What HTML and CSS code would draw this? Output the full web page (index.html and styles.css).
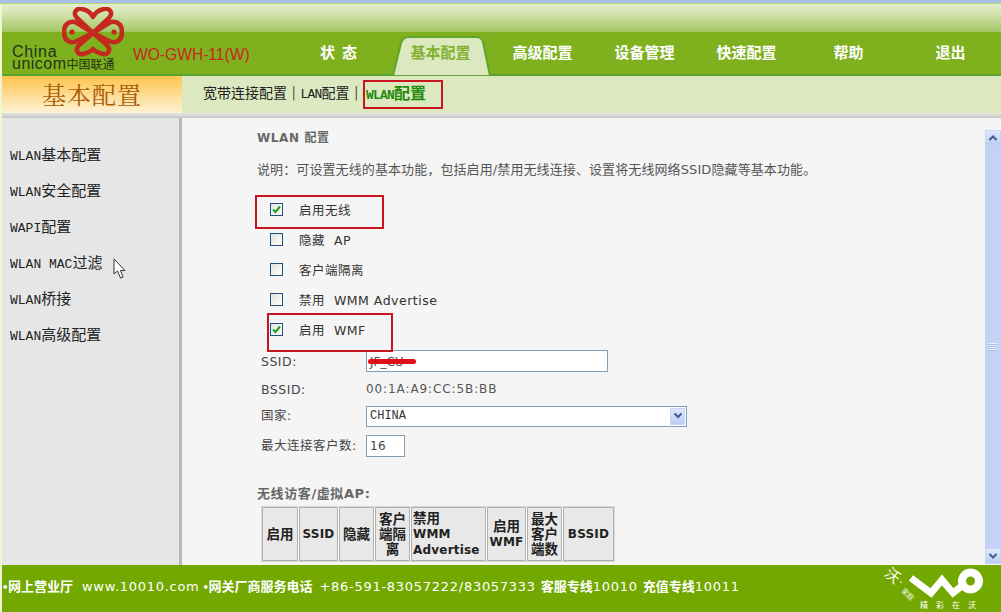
FILE: index.html
```html
<!DOCTYPE html>
<html lang="zh-CN">
<head>
<meta charset="utf-8">
<title>基本配置</title>
<link rel="stylesheet" href="styles.css">
</head>
<body>
<div class="page">
  <div class="blue-strip"></div>
  <header class="header">
    <div class="gloss"></div>
    <div class="nav-band">
      <div class="brand">
        <svg class="knot" viewBox="0 0 62 52" width="62" height="52" aria-hidden="true">
          <g fill="none" stroke="#c5281f" stroke-width="4.6" stroke-linejoin="round" stroke-linecap="round">
            <path d="M31 26 L15 11 C10 5 15 1 20 2 C25 3 29 6 31 10 C33 6 37 3 42 2 C47 1 52 5 47 11 Z"/>
            <path d="M31 26 L17 38 C12 44 17 48 21 47 C25 46 29 45 31 42 C33 45 37 46 41 47 C45 48 50 44 45 38 Z"/>
            <path d="M31 26 L15 16 C9 13 2 16 2 25 C2 34 9 37 15 34 Z"/>
            <path d="M31 26 L47 16 C53 13 60 16 60 25 C60 34 53 37 47 34 Z"/>
            <path d="M23 33 L39 19" stroke-width="3"/>
          </g>
          <circle cx="10" cy="25" r="2.6" fill="#c5281f"/>
          <circle cx="52" cy="25" r="2.6" fill="#c5281f"/>
        </svg>
        <div class="logo-text">
          <div class="logo-china">China</div>
          <div class="logo-unicom">unicom<span class="logo-cn">中国联通</span></div>
        </div>
        <div class="model">WO-GWH-11(W)</div>
      </div>
      <nav class="nav">
        <a class="nav-item">状&nbsp;&nbsp;态</a>
        <a class="nav-item nav-active">
          <svg class="tab-shape" viewBox="0 0 100 40" width="100" height="40" aria-hidden="true" preserveAspectRatio="none">
            <path d="M1 40 L9 7 Q11 1 17 1 L84 1 Q90 1 91 6 L98 40 Z" fill="#dce8c0" stroke="#5ea62c" stroke-width="2"/>
          </svg>
          <span class="tab-label">基本配置</span>
        </a>
        <a class="nav-item">高级配置</a>
        <a class="nav-item">设备管理</a>
        <a class="nav-item">快速配置</a>
        <a class="nav-item">帮助</a>
        <a class="nav-item">退出</a>
      </nav>
    </div>
    <div class="sub-band">
      <div class="section-title">基本配置</div>
      <div class="sub-links">
        <a class="sub-link"><span>宽带连接配置</span></a>
        <span class="sep">|</span>
        <a class="sub-link"><span class="lat-small">LAN</span>配置</a>
        <span class="sep">|</span>
        <a class="sub-link sub-current"><span class="lat-small">WLAN</span>配置</a>
      </div>
    </div>
  </header>
  <div class="grey-band"></div>
  <main class="main">
    <aside class="sidebar">
      <a class="side-item"><span class="lat">WLAN</span>基本配置</a>
      <a class="side-item"><span class="lat">WLAN</span>安全配置</a>
      <a class="side-item"><span class="lat">WAPI</span>配置</a>
      <a class="side-item"><span class="lat">WLAN MAC</span>过滤</a>
      <a class="side-item"><span class="lat">WLAN</span>桥接</a>
      <a class="side-item"><span class="lat">WLAN</span>高级配置</a>
    </aside>
    <section class="content">
      <h1 class="content-title">WLAN 配置</h1>
      <p class="desc">说明：可设置无线的基本功能，包括启用/禁用无线连接、设置将无线网络SSID隐藏等基本功能。</p>
      <div class="checks">
        <label class="check-row"><span class="box box-on"><svg viewBox="0 0 11 11" width="11" height="11"><path d="M2 5.5 L4.5 8 L9 2.5" fill="none" stroke="#21a121" stroke-width="2"/></svg></span>启用无线</label>
        <label class="check-row"><span class="box"></span>隐藏&nbsp; AP</label>
        <label class="check-row"><span class="box"></span>客户端隔离</label>
        <label class="check-row"><span class="box"></span>禁用&nbsp; WMM Advertise</label>
        <label class="check-row"><span class="box box-on"><svg viewBox="0 0 11 11" width="11" height="11"><path d="M2 5.5 L4.5 8 L9 2.5" fill="none" stroke="#21a121" stroke-width="2"/></svg></span>启用&nbsp; WMF</label>
      </div>
      <div class="form">
        <div class="form-label">SSID:</div>
        <div class="field-ssid">JF_CU</div>
        <div class="form-label">BSSID:</div>
        <div class="value">00:1A:A9:CC:5B:BB</div>
        <div class="form-label label-cjk">国家:</div>
        <div class="field-select">
          <span class="select-text">CHINA</span>
          <span class="select-btn"><svg viewBox="0 0 10 8" width="10" height="8"><path d="M1.5 1.5 L5 5 L8.5 1.5" fill="none" stroke="#3c5a96" stroke-width="2"/></svg></span>
        </div>
        <div class="form-label label-cjk">最大连接客户数:</div>
        <div class="field-num">16</div>
      </div>
      <h2 class="table-title">无线访客/虚拟AP:</h2>
      <table class="ap-table">
        <thead>
          <tr>
            <th class="c1">启用</th>
            <th class="c2"><span class="th-lat">SSID</span></th>
            <th class="c3">隐藏</th>
            <th class="c4">客户端隔离</th>
            <th class="c5">禁用<br><span class="th-lat">WMM<br>Advertise</span></th>
            <th class="c6">启用<br><span class="th-lat">WMF</span></th>
            <th class="c7">最大客户端数</th>
            <th class="c8"><span class="th-lat">BSSID</span></th>
          </tr>
        </thead>
      </table>
    </section>
    <div class="scrollbar">
      <span class="sb-btn"><svg viewBox="0 0 10 8" width="10" height="8"><path d="M1.5 6 L5 2.5 L8.5 6" fill="none" stroke="#3c5a96" stroke-width="2"/></svg></span>
      <span class="sb-track"><span class="sb-grip"></span></span>
      <span class="sb-btn"><svg viewBox="0 0 10 8" width="10" height="8"><path d="M1.5 2 L5 5.5 L8.5 2" fill="none" stroke="#3c5a96" stroke-width="2"/></svg></span>
    </div>
  </main>
  <footer class="footer">
    <div class="foot-text"><span class="foot-dot">•</span>网上营业厅<span class="foot-lat foot-www">www.10010.com</span><span class="foot-dot foot-dot-2">•</span>网关厂商服务电话<span class="foot-lat foot-phone">+86-591-83057222/83057333</span><span class="foot-cn">客服专线</span><span class="foot-lat">10010</span><span class="foot-cn">充值专线</span><span class="foot-lat">10011</span></div>
    <div class="wo-logo">
      <span class="wo-char">沃</span>
      <span class="wo-dot">·</span>
      <span class="wo-home">家庭</span>
      <svg class="wo-mark" viewBox="0 0 80 40" width="80" height="40" aria-hidden="true">
        <path d="M4 11 L24 26 L35 13 L46 26 L56 18" fill="none" stroke="#fff" stroke-width="7"/>
        <circle cx="63.5" cy="14" r="8.5" fill="none" stroke="#fff" stroke-width="8"/>
      </svg>
      <span class="wo-slogan">精 彩 在 沃</span>
    </div>
  </footer>

  <div class="mark mark-sub"></div>
  <div class="mark mark-wireless"></div>
  <div class="mark mark-wmf"></div>
  <div class="scribble"></div>
  <svg class="cursor" viewBox="0 0 14 22" width="14" height="22" aria-hidden="true">
    <path d="M1 1 L1 16 L4.5 13 L7.5 20 L10 19 L7.5 12.5 L12 12.5 Z" fill="#fff" stroke="#333" stroke-width="1"/>
  </svg>
</div>
</body>
</html>
```

FILE: styles.css
```css
* { box-sizing: border-box; }
html, body { margin: 0; padding: 0; }
body {
  width: 1001px;
  height: 612px;
  overflow: hidden;
  font-family: "DejaVu Sans", "Noto Sans CJK SC", sans-serif;
  font-size: 12px;
  color: #333;
  background: #eef7d0;
}
.page {
  position: relative;
  width: 1001px;
  height: 612px;
  display: flex;
  flex-direction: column;
}
.blue-strip { height: 4px; background: #a9c0ea; border-bottom: 1px solid #b5d37a; }

.header { display: flex; flex-direction: column; padding-left: 2px; }
.gloss { height: 28px; background: linear-gradient(#e4eecb, #d6e5b4 30%, #a2c662); }
.nav-band {
  height: 44px;
  background: #7fb11f;
  border-bottom: 2px solid #58a232;
  display: flex;
}
.brand { position: relative; width: 285px; height: 42px; }
.knot { position: absolute; left: 60px; top: -25px; }
.logo-text {
  position: absolute;
  left: 10px;
  top: 14px;
  font-family: "Liberation Sans", sans-serif;
  color: #1d3317;
  line-height: 11px;
  font-size: 16px;
  letter-spacing: 0.7px;
}
.logo-unicom { display: flex; align-items: center; white-space: nowrap; letter-spacing: 0.5px; margin-top: 1px; }
.logo-cn { font-family: "Noto Sans CJK SC", sans-serif; font-size: 12px; letter-spacing: 0; }
.model {
  position: absolute;
  left: 131px;
  top: 14px;
  font-family: "Liberation Sans", sans-serif;
  font-size: 15.6px;
  color: #c5281f;
  white-space: nowrap;
}
.nav { display: flex; }
.nav-item {
  position: relative;
  width: 102px;
  height: 42px;
  display: flex;
  align-items: center;
  justify-content: center;
  color: #fff;
  font-family: "Noto Sans CJK SC", sans-serif;
  font-weight: 700;
  font-size: 15px;
  padding: 0 0 4px 1px;
}
.tab-shape { position: absolute; left: 3px; top: 4px; }
.tab-label { position: relative; color: #83b030; }

.sub-band { height: 37px; display: flex; background: #dce8c0; }
.section-title {
  width: 180px;
  height: 37px;
  background: linear-gradient(#ffc44c, #fdf2d6);
  color: #a85c08;
  font-family: "Noto Serif CJK SC", "Noto Sans CJK SC", serif;
  font-size: 24px;
  letter-spacing: 1px;
  line-height: 36px;
  text-align: center;
}
.sub-links {
  display: flex;
  align-items: center;
  padding: 0 0 6px 21px;
  font-family: "Noto Sans CJK SC", sans-serif;
  font-size: 14px;
  color: #222;
}
.sep { margin: 0 5px 0 5px; font-size: 13px; }
.sub-current { color: #1f8a0a; font-weight: 700; margin-left: 3px; font-size: 16px; }
.lat-small { font-family: "Liberation Mono", monospace; font-size: 13px; letter-spacing: -0.8px; }

.grey-band { height: 5px; margin-left: 2px; background: linear-gradient(#e4e6dc, #c6c6c8); }

.main { height: 447px; display: flex; margin-left: 2px; overflow: hidden; }
.sidebar {
  width: 177px;
  flex: none;
  background: #e6e6e6;
  padding-top: 18px;
  display: flex;
  flex-direction: column;
}
.side-item {
  height: 36px;
  padding-left: 8px;
  line-height: 36px;
  font-family: "Noto Sans CJK SC", sans-serif;
  font-size: 15px;
  color: #222;
  white-space: pre;
}
.lat { font-family: "Liberation Mono", monospace; font-size: 13px; letter-spacing: 0; }

.content {
  flex: 1;
  background: #f5f5f5;
  border-left: 3px solid #b8b8b8;
  padding: 12px 0 0 75px;
  overflow: hidden;
  color: #444;
}
.content-title { margin: 0; font-size: 12px; line-height: 16px; font-weight: 700; letter-spacing: 0.6px; color: #666; }
.desc { margin: 16px 0 0; line-height: 16px; font-size: 13px; white-space: nowrap; color: #555; letter-spacing: 0.1px; }
.checks { margin-top: 16px; display: flex; flex-direction: column; padding-left: 13px; }
.check-row { height: 30px; display: flex; align-items: center; gap: 16px; font-size: 12.5px; letter-spacing: 0.5px; color: #333; white-space: nowrap; }
.box {
  width: 13px;
  height: 13px;
  border: 1px solid #1c5180;
  background: linear-gradient(135deg, #e2e2dc, #fff);
  display: flex;
  align-items: center;
  justify-content: center;
}
.form {
  margin: 4px 0 0 4px;
  display: grid;
  grid-template-columns: 105px 1fr;
  grid-template-rows: 26px 30px 24px 36px;
  align-items: center;
  justify-items: start;
}
.form-label { font-size: 12.5px; letter-spacing: 0.5px; color: #444; white-space: nowrap; }
.label-cjk { margin-bottom: 3px; }
.value { letter-spacing: 0.9px; font-size: 12px; color: #555; }
.field-ssid {
  width: 242px;
  height: 22px;
  border: 1px solid #7f9db9;
  background: #fff;
  padding-left: 3px;
  line-height: 22px;
  color: #555;
}
.field-select {
  width: 321px;
  height: 21px;
  border: 1px solid #7f9db9;
  background: #fff;
  display: flex;
  align-items: center;
  justify-content: space-between;
  padding: 1px;
}
.select-text { font-family: "Liberation Mono", monospace; font-size: 12px; padding-left: 2px; color: #333; }
.select-btn, .sb-btn {
  display: flex;
  align-items: center;
  justify-content: center;
  background: linear-gradient(#dfe8fb, #bccbf2);
  border: 1px solid #c8d6f5;
}
.select-btn { width: 15px; height: 17px; }
.field-num {
  width: 39px;
  height: 22px;
  border: 1px solid #7f9db9;
  background: #fff;
  padding-left: 3px;
  line-height: 21px;
  font-size: 12px;
  letter-spacing: 0.4px;
  color: #444;
}
.table-title { margin: 22px 0 0; font-size: 13px; line-height: 16px; font-weight: 700; letter-spacing: 0.6px; color: #666; }
.ap-table {
  margin: 4px 0 0 4px;
  border-collapse: separate;
  border-spacing: 1px;
  table-layout: fixed;
  width: 354px;
  background: #fff;
  outline: 1px solid #d8d8d8;
  outline-offset: -1px;
}
.ap-table th {
  height: 54px;
  padding: 0 1px;
  background: #e8e8e8;
  border: 1px solid #b0b0b0;
  font-size: 13.5px;
  line-height: 15px;
  font-weight: 700;
  color: #222;
}
.th-lat { font-size: 12px; letter-spacing: 0.2px; }
.c1 { width: 36px; } .c2 { width: 39px; } .c3 { width: 35px; } .c4 { width: 35px; }
.c5 { width: 75px; text-align: left; } .c6 { width: 39px; } .c7 { width: 35px; } .c8 { width: 51px; }

.scrollbar { width: 16px; flex: none; display: flex; flex-direction: column; background: #f5f5f5; padding-top: 12px; padding-bottom: 1px; }
.sb-btn { height: 16px; flex: none; }
.sb-track { flex: 1; background: #c3d2f6; display: flex; align-items: center; justify-content: center; }
.sb-grip { width: 8px; height: 8px; background: repeating-linear-gradient(#eef2fd 0 1px, #a8bbe8 1px 2px); }

.footer {
  flex: 1;
  margin-left: 2px;
  background: #72a800;
  display: flex;
  position: relative;
  color: #fff;
}
.foot-text {
  padding: 13px 0 0 0;
  font-family: "Noto Sans CJK SC", sans-serif;
  font-size: 13px;
  line-height: 16px;
  font-weight: 700;
  white-space: nowrap;
}
.foot-dot { font-family: "DejaVu Sans", sans-serif; font-size: 10px; letter-spacing: -0.4px; }
.foot-dot-2 { margin-left: 3px; }
.foot-lat { font-family: "DejaVu Sans", sans-serif; font-weight: 400; font-size: 13px; letter-spacing: 0.72px; }
.foot-www { margin-left: 9px; }
.foot-phone { margin-left: 7px; }
.foot-cn { margin-left: 5px; }
.wo-logo { position: absolute; left: 875px; top: 0; width: 124px; height: 47px; }
.wo-char { position: absolute; left: 9px; top: 2px; font-size: 15px; line-height: 15px; transform: rotate(40deg); font-family: "Noto Sans CJK SC", sans-serif; }
.wo-dot { position: absolute; left: 22px; top: 12px; font-size: 12px; line-height: 12px; }
.wo-home { position: absolute; left: 24px; top: 25px; font-size: 7px; line-height: 8px; transform: rotate(45deg); font-family: "Noto Sans CJK SC", sans-serif; }
.wo-mark { position: absolute; left: 30px; top: 2px; }
.wo-slogan { position: absolute; left: 43px; top: 35px; font-size: 8px; line-height: 10px; letter-spacing: 3.1px; white-space: nowrap; font-family: "Noto Sans CJK SC", sans-serif; }

.mark { position: absolute; border: 2px solid #c8141e; }
.mark-sub { left: 363px; top: 80px; width: 80px; height: 29px; }
.mark-wireless { left: 255px; top: 195px; width: 129px; height: 34px; }
.mark-wmf { left: 267px; top: 313px; width: 126px; height: 39px; }
.scribble { position: absolute; left: 368px; top: 359px; width: 48px; height: 5px; background: #e0101a; border-radius: 2.5px; }
.cursor { position: absolute; left: 113px; top: 258px; }
```
